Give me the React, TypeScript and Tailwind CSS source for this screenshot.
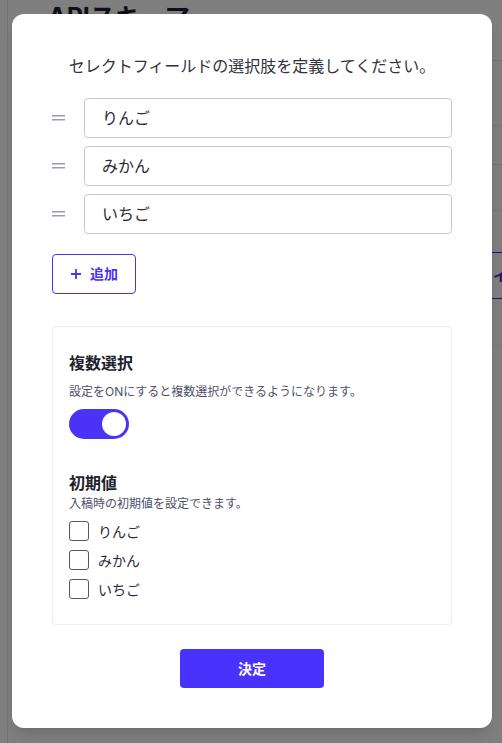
import React, { useState } from 'react';

const FONT = { fontFamily: 'Inter, "Noto Sans CJK JP", "Noto Sans", sans-serif' };

const fruits = ['りんご', 'みかん', 'いちご'];

// drag handle shown left of each option input
const Handle: React.FC = () => (
  <svg width="14" height="8" viewBox="0 0 14 8" className="shrink-0">
    <rect x="0" y="1" width="13" height="1.5" fill="#9b9bb1" />
    <rect x="0" y="5" width="13" height="1.5" fill="#9b9bb1" />
  </svg>
);

export default function App() {
  const [multi, setMulti] = useState(true);
  const [checked, setChecked] = useState<boolean[]>([false, false, false]);

  return (
    <div className="relative h-[743px] w-full overflow-hidden bg-white" style={FONT}>
      {/* Page behind the modal */}
      <div className="absolute inset-y-0 left-[7px] border-l border-gray-200" />
      <div className="absolute left-[48px] top-[1px] text-[25px] font-bold leading-[32px] text-[#1f1f2e]">
        APIスキーマ
      </div>
      <div className="absolute left-[40px] right-0 top-[60px] border-t border-gray-200" />
      <div className="absolute left-[40px] right-0 top-[125px] border-t border-gray-200" />
      <div className="absolute left-[40px] right-0 top-[164px] border-t border-gray-200" />
      <div className="absolute left-[40px] right-0 top-[210px] border-t border-gray-200" />
      <div className="absolute left-[400px] right-0 top-[252px] flex h-[47px] items-center overflow-hidden whitespace-nowrap border-y border-[#3b2ee6] pl-[93px] text-[14px] font-bold text-[#3b2ee6]">
        インポート
      </div>
      <div className="absolute left-[40px] right-0 top-[345px] border-t border-gray-200" />

      {/* Overlay */}
      <div className="absolute inset-0 bg-black/50">
        <div className="ml-[12px] mt-[14px] flex h-[714px] w-[480px] flex-col rounded-xl bg-white px-10 pb-10 pt-10 shadow-lg">
          <p className="text-center text-[16px] leading-6 text-[#333340]">
            セレクトフィールドの選択肢を定義してください。
          </p>

          <div className="mt-5 flex flex-col gap-2">
            {fruits.map((f) => (
              <div key={f} className="flex items-center gap-[18px]">
                <Handle />
                <div className="flex h-10 flex-1 items-center rounded border border-[#c9c5e2] px-[17px] text-[16px] text-[#2b2b38]">
                  {f}
                </div>
              </div>
            ))}
          </div>

          <button className="mt-5 flex h-10 w-[84px] items-center justify-center gap-[8px] rounded border border-[#4a32f7] text-[14px] font-bold text-[#4a32f7]">
            <svg width="12" height="12" viewBox="0 0 12 12">
              <path d="M6 1v10M1 6h10" stroke="#4a32f7" strokeWidth="1.8" />
            </svg>
            追加
          </button>

          <div className="mt-8 rounded border border-[#efeef6] px-4 py-6">
            <div className="text-[16px] font-bold leading-6 text-[#1f1f2e]">複数選択</div>
            <div className="mt-2 text-[12px] leading-[18px] text-[#4f5168]">
              設定をONにすると複数選択ができるようになります。
            </div>
            <button
              onClick={() => setMulti(!multi)}
              className={`mt-2 flex h-[30px] w-[60px] items-center rounded-full px-[3px] ${
                multi ? 'justify-end bg-[#4a32f7]' : 'justify-start bg-gray-300'
              }`}
            >
              <span className="h-6 w-6 rounded-full bg-white" />
            </button>

            <div className="mt-8 text-[16px] font-bold leading-6 text-[#1f1f2e]">初期値</div>
            <div className="text-[12px] leading-[18px] text-[#4f5168]">入稿時の初期値を設定できます。</div>
            <div className="mt-2 flex flex-col gap-2">
              {fruits.map((f, i) => (
                <label key={f} className="flex h-[21px] items-center gap-[9px] text-[14px] text-[#2b2b38]">
                  <span
                    onClick={() => setChecked(checked.map((c, j) => (j === i ? !c : c)))}
                    className={`h-5 w-5 rounded-[3px] border border-[#55566a] ${checked[i] ? 'bg-[#4a32f7]' : 'bg-white'}`}
                  />
                  {f}
                </label>
              ))}
            </div>
          </div>

          <button className="mx-auto mt-6 h-10 w-[144px] rounded bg-[#4a32fd] text-[14px] font-bold text-white">
            決定
          </button>
        </div>
      </div>
    </div>
  );
}
